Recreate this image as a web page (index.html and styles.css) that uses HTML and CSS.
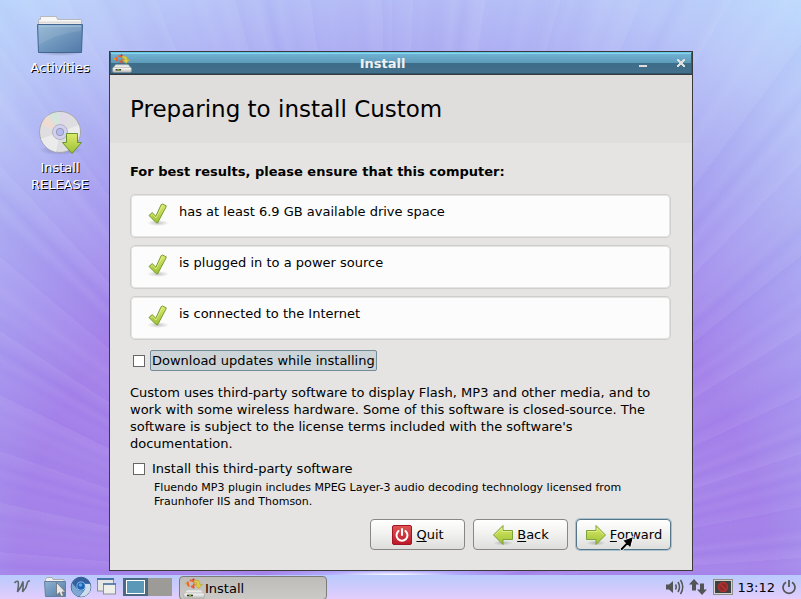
FILE: index.html
```html
<!DOCTYPE html>
<html lang="en">
<head>
<meta charset="utf-8">
<title>Install</title>
<link rel="stylesheet" href="styles.css">
</head>
<body>
<svg class="defs" aria-hidden="true">
  <defs>
    <linearGradient id="lime" x1="0" y1="0" x2="0" y2="1"><stop offset="0" stop-color="#dcea6c"/><stop offset="1" stop-color="#9cc032"/></linearGradient>
    <linearGradient id="blue" x1="0" y1="0" x2="1" y2="1"><stop offset="0" stop-color="#8fb4d2"/><stop offset="1" stop-color="#5079a8"/></linearGradient>
    <linearGradient id="red" x1="0" y1="0" x2="0" y2="1"><stop offset="0" stop-color="#df5656"/><stop offset="1" stop-color="#bd1726"/></linearGradient>
    <linearGradient id="metal" x1="0" y1="0" x2="0" y2="1"><stop offset="0" stop-color="#ffffff"/><stop offset="1" stop-color="#bdbdb9"/></linearGradient>
    <radialGradient id="shade"><stop offset="0" stop-color="#000" stop-opacity=".22"/><stop offset="1" stop-color="#000" stop-opacity="0"/></radialGradient>
    <symbol id="tick" viewBox="0 0 24 24">
      <ellipse cx="12" cy="20" rx="11" ry="3" fill="url(#shade)"/>
      <path d="M3 12.500 6.200 9.600 9.800 13.200 15.200 1.600 16.500 1 20.200 2.800 20 4 11.500 20 10 19.500Z" fill="url(#lime)" stroke="#779b35" stroke-linejoin="round"/>
      <path d="M5 12.500 6.500 11.300 10 15 16.300 2.600" fill="none" stroke="#f0f5a8" stroke-opacity=".6"/>
    </symbol>
    <symbol id="arrow" viewBox="0 0 22 22">
      <ellipse cx="11" cy="19" rx="10" ry="2.500" fill="url(#shade)"/>
      <path d="M1.500 6.500H11V1.500L20.500 11 11 20.500V15.500H1.500Z" fill="url(#lime)" stroke="#7aa33a" stroke-linejoin="round"/>
      <path d="M2.500 7.500H12V4L19 11" fill="none" stroke="#eef5a0" stroke-opacity=".6"/>
    </symbol>
    <symbol id="installer" viewBox="0 0 22 22">
      <circle cx="8" cy="6.500" r="3.200" fill="none" stroke="#f05a28" stroke-width="1.800" stroke-dasharray="5 1.700"/>
      <circle cx="3.200" cy="6.500" r="1.100" fill="#f39a22"/><circle cx="10.500" cy="2.500" r="1.100" fill="#d9232b"/><circle cx="10.500" cy="10.500" r="1.100" fill="#e6452a"/>
      <path d="M11 3.500Q17 2 17 7.500H19.500L15.500 11.500 11.500 7.500H14Q14 5 11 5.500Z" fill="#dccb48" stroke="#b9a12c" stroke-width=".6"/>
      <path d="M4 13H18L21 17H1Z" fill="#e9e9e7" stroke="#c6c6c2" stroke-width=".6"/>
      <rect x=".8" y="16" width="20.500" height="5.200" rx="1" fill="url(#metal)" stroke="#a0a09b" stroke-width=".6"/>
      <path d="M4 18.500H10" stroke="#333" stroke-width="1.600"/><path d="M6 18.500H8" stroke="#75b821" stroke-width="1.600"/>
    </symbol>
  </defs>
</svg>

<main class="desktop">
  <nav class="shortcuts" aria-label="Desktop">
    <a class="shortcut" href="#activities">
      <svg width="48" height="48" viewBox="0 0 48 48" aria-hidden="true">
        <ellipse cx="24" cy="45" rx="23" ry="3" fill="url(#shade)"/>
        <path d="M2.500 24V11.500H4.500V8.500H20.500L21.500 11.500H45.500V24Z" fill="#f7f7f6" stroke="#b6b8bd"/>
        <path d="M3 14.500H45" stroke="#dedcda" stroke-width="2"/>
        <path d="M1.500 16.500H46.500L45.500 44.500H2.500Z" fill="url(#blue)" stroke="#416691" stroke-linejoin="round"/>
        <path d="M3 18H45" stroke="#a8c5dc"/>
        <path d="M3 18H45V23Q22 25 3 37Z" fill="#fff" opacity=".1"/>
      </svg>
      <span>Activities</span>
    </a>
    <a class="shortcut" href="#install">
      <svg width="48" height="48" viewBox="0 0 48 48" aria-hidden="true">
        <ellipse cx="24" cy="42" rx="22" ry="5" fill="url(#shade)"/>
        <circle cx="24" cy="24" r="20.500" fill="#dedee0" stroke="#a5a5ab"/>
        <path d="M24 24 12 7.500Q18 3.500 24 4Z" fill="#d3e6da" opacity=".8"/>
        <path d="M24 24 5.500 17Q8 10 12 7.500Z" fill="#f0dbd0" opacity=".9"/>
        <path d="M24 24 24 4Q30 4 34 7Z" fill="#e0d8e8" opacity=".8"/>
        <path d="M24 24 43 17Q45 26 42 32Z" fill="#ececed"/>
        <path d="M24 24 5 31Q10 42 20 44Z" fill="#ebebec"/>
        <circle cx="24" cy="24" r="7.500" fill="#d1d1ef" stroke="#b2b2c4"/>
        <circle cx="24" cy="24" r="3.700" fill="#b4baf4" stroke="#9999ad"/>
        <path d="M30.500 25.500H41.500V34.500H45.500L36 45.500 26.500 34.500H30.500Z" fill="url(#lime)" stroke="#68932c" stroke-linejoin="round"/>
      </svg>
      <span>Install RELEASE</span>
    </a>
  </nav>

  <section class="window" aria-label="Install">
    <header class="titlebar">
      <svg width="20" height="20" aria-hidden="true"><use href="#installer"/></svg>
      <h1>Install</h1>
      <div class="controls">
        <button type="button" aria-label="Minimize"><svg width="8" height="8" viewBox="0 0 8 8"><path d="M0 6H8V8H0Z" fill="#dededd"/></svg></button>
        <button type="button" aria-label="Close"><svg width="8" height="8" viewBox="0 0 8 8" shape-rendering="crispEdges"><path d="M0 0H2V1H3V2H5V1H6V0H8V2H7V3H6V5H7V6H8V8H6V7H5V6H3V7H2V8H0V6H1V5H2V3H1V2H0Z" fill="#dededd"/></svg></button>
      </div>
    </header>
    <div class="heading"><h2>Preparing to install Custom</h2></div>
    <form class="content">
      <h3>For best results, please ensure that this computer:</h3>
      <ul class="checks">
        <li><svg width="24" height="24" aria-hidden="true"><use href="#tick"/></svg>has at least 6.9 GB available drive space</li>
        <li><svg width="24" height="24" aria-hidden="true"><use href="#tick"/></svg>is plugged in to a power source</li>
        <li><svg width="24" height="24" aria-hidden="true"><use href="#tick"/></svg>is connected to the Internet</li>
      </ul>
      <div class="option"><input type="checkbox" id="updates"><label class="focused" for="updates">Download updates while installing</label></div>
      <p class="terms">Custom uses third-party software to display Flash, MP3 and other media, and to work with some wireless hardware. Some of this software is closed-source. The software is subject to the license terms included with the software's documentation.</p>
      <div class="option"><input type="checkbox" id="software"><label for="software">Install this third-party software</label></div>
      <p class="note">Fluendo MP3 plugin includes MPEG Layer-3 audio decoding technology licensed from Fraunhofer IIS and Thomson.</p>
      <div class="actions">
        <button type="button">
          <svg width="22" height="22" viewBox="0 0 22 22" aria-hidden="true"><rect x="1.500" y="1.500" width="19" height="19" rx="1.500" fill="url(#red)" stroke="#a31626"/><path d="M7.500 7A5.500 5.500 0 1 0 14.500 7M11 5V11" fill="none" stroke="#fff" stroke-width="2" stroke-linecap="round"/></svg>
          <span><u>Q</u>uit</span>
        </button>
        <button type="button">
          <svg class="flip" width="22" height="22" aria-hidden="true"><use href="#arrow"/></svg>
          <span><u>B</u>ack</span>
        </button>
        <button type="button" class="hover">
          <svg width="22" height="22" aria-hidden="true"><use href="#arrow"/></svg>
          <span><u>F</u>orward</span>
          <svg class="pointer" width="16" height="17" viewBox="0 0 16 17" aria-hidden="true"><path d="M14.500 1.500 3.500 5.500 6.500 8 .8 14 2.800 16 8.500 10 11.500 13Z" fill="#000" stroke="#fff"/></svg>
        </button>
      </div>
    </form>
  </section>
</main>

<footer class="taskbar">
  <div class="launchers">
    <button type="button" class="menu" aria-label="Menu"><svg width="18" height="16" viewBox="0 0 18 16"><path d="M1.500 4Q3.500 1.500 5 2.500 6 4 4.500 13M4.500 13Q8.500 8 10 2.500 10.500 8 9.500 13M9.500 13Q13.500 9 14 5 14.500 1.500 17 2" fill="none" stroke="#5d666b" stroke-width="1.600"/></svg></button>
    <button type="button" aria-label="File manager"><svg width="22" height="22" viewBox="0 0 22 22"><path d="M1.500 8V3.500L3 1.500H8L9 3.500H20V8Z" fill="#f1f1ef" stroke="#aaa"/><path d="M.500 5.500H21.500V20.500H1.500Z" fill="url(#blue)" stroke="#66809e"/><path d="M12.500 6.500V19L15.500 16.500 17 20.500 19.500 19.500 18 16H21.500Z" fill="#e8e8e8" stroke="#707070" stroke-width=".8"/></svg></button>
    <button type="button" aria-label="Web browser"><svg width="22" height="22" viewBox="0 0 22 22"><circle cx="11" cy="11" r="9.800" fill="#5281bb" stroke="#375d91"/><path d="M2 7.500Q8 -1 15 2.500 19 4 20 7.500H11Q7 8 7 12Z" fill="#345f9f"/><path d="M20 8H13Q17 11 14 15L9.500 20.500Q17 21.500 20 15 21.500 11 20 8Z" fill="#cdddec"/><path d="M2 7 7 13Q9 16 13 15L9 20.500Q2 19 1.500 12Z" fill="#7fa9d4"/><circle cx="11" cy="10" r="4.500" fill="#a9cdf0"/><circle cx="11" cy="10" r="3.800" fill="#1b62b5"/><circle cx="10.500" cy="9" r="1.800" fill="#5fa4e2"/></svg></button>
    <button type="button" aria-label="Show desktop"><svg width="22" height="22" viewBox="0 0 22 22"><rect x="1.500" y="3" width="16" height="12" fill="#e6e6e3" stroke="#8a8f98"/><path d="M1 3H18" stroke="#4670a7" stroke-width="2"/><rect x="7.500" y="8" width="12" height="10" fill="#eeeeeb" stroke="#8a8f98"/><path d="M7 8H20" stroke="#4670a7" stroke-width="1.500"/></svg></button>
  </div>
  <div class="pager"><button type="button" class="current" aria-label="Desktop 1"><i></i></button><button type="button" aria-label="Desktop 2"></button></div>
  <button type="button" class="task"><svg width="22" height="22" aria-hidden="true"><use href="#installer"/></svg>Install</button>
  <div class="tray">
    <svg width="20" height="18" viewBox="0 0 20 18" aria-hidden="true"><path d="M1 6.500H4L8 3V15L4 11.500H1Z" fill="#525456"/><path d="M10.500 6.500Q12 9 10.500 11.500M13 4Q16 9 13 14M15.500 2Q20 9 15.500 16" fill="none" stroke="#525456" stroke-width="1.500"/></svg>
    <svg width="18" height="18" viewBox="0 0 18 18" aria-hidden="true"><path d="M5 1 10 6.500H7V12.500H3V6.500H0ZM13 17 8 11.500H11V5.500H15V11.500H18Z" fill="#525456"/></svg>
    <svg class="monitor" width="20" height="16" viewBox="0 0 20 16" aria-hidden="true"><rect x=".5" y=".5" width="19" height="15" fill="#d5d4cc" stroke="#8e8e87"/><rect x="2" y="2" width="16" height="12" fill="#3d4143"/><circle cx="10" cy="8" r="4.500" fill="#8c2a2a" stroke="#b53030" stroke-width="1.500"/><path d="M7 5 13 11" stroke="#b53030" stroke-width="1.500"/></svg>
    <time>13:12</time>
    <button type="button" aria-label="Shut down"><svg width="16" height="16" viewBox="0 0 16 16"><path d="M5 3.200A6 6 0 1 0 11 3.200M8 1V8" fill="none" stroke="#55575a" stroke-width="1.800"/></svg></button>
  </div>
</footer>
</body>
</html>
```
FILE: styles.css
```css
* { box-sizing: border-box; }

body {
  margin: 0;
  min-height: 100vh;
  display: flex;
  flex-direction: column;
  font: 13px/17px "DejaVu Sans", sans-serif;
  color: #000;
}

h1, h2, h3, p, ul { margin: 0; padding: 0; }
button { font: inherit; color: inherit; border: 0; padding: 0; background: none; }
svg { display: block; flex: none; }
.defs { position: absolute; width: 0; height: 0; }

.desktop {
  flex: 1;
  display: flex;
  padding: 51px 108px 4px 0;
  background:
    radial-gradient(ellipse 130px 8px at 49% 100%, #ffffff 0%, #b4b4ffcc 50%, #9f91f500 100%),
    repeating-conic-gradient(from 0deg at 49% 102%, #ffffff00 0deg, #ffffff0a 1deg, #ffffff10 2deg, #ffffff00 2deg, #ffffff06 4deg, #ffffff00 5deg, #ffffff0c 6deg, #ffffff00 7deg),
    repeating-conic-gradient(from 3deg at 49% 102%, #5040c000 0deg, #5040c008 1deg, #5040c000 3deg, #5040c008 4deg, #5040c000 5deg, #5040c000 11deg),
    repeating-conic-gradient(from 0deg at 49% 102%, #ffffff00 0deg, #ffffff0a 9deg, #ffffff00 10deg, #ffffff00 13deg),
    radial-gradient(circle 720px at 49% 102%, #a481e9 0%, #a380e9 52%, #a697ef 64%, #adaff3 76%, #b8c6f8 87%, #bcdafd 100%);
}

.shortcuts {
  flex: none;
  width: 109px;
  margin-top: -43px;
  padding-left: 11px;
  display: flex;
  flex-direction: column;
  align-items: center;
  gap: 32px;
}
.shortcut {
  width: 70px;
  display: flex;
  flex-direction: column;
  align-items: center;
  gap: 3px;
  color: #fff;
  text-align: center;
  text-decoration: none;
  text-shadow: 1px 1px 0 #000;
}

.window {
  flex: 1;
  min-width: 0;
  display: flex;
  flex-direction: column;
  border: 1px solid #3a3a3a;
  background: #e5e4e2;
}
.titlebar {
  height: 22px;
  display: flex;
  align-items: center;
  padding: 0 0 0 1px;
  border: 1px solid #325d74;
  border-top-color: #66c5e4;
  border-bottom-color: #2d566d;
  box-shadow: 0 1px #3a3a3a, inset 0 1px #84d7ef;
  background: linear-gradient(#74b4d4 0, #5c9aba 50%, #3e6d8a 50%, #436f8a 100%);
}
.titlebar h1 {
  flex: 1;
  text-align: center;
  font-size: 13px;
  line-height: 17px;
  color: #f0f0f0;
}
.controls { display: flex; gap: 18px; }
.controls button { width: 20px; height: 17px; display: grid; place-items: center; }

.heading {
  margin-top: 1px;
  height: 68px;
  display: flex;
  align-items: center;
  padding: 0 20px;
  background: #dfdedc;
}
.heading h2 { font-weight: normal; font-size: 23px; line-height: 28px; }

.content {
  flex: 1;
  display: flex;
  flex-direction: column;
  padding: 20px 21px 20px 20px;
}
.content h3 { font-size: 13px; line-height: 17px; }
.checks { list-style: none; display: grid; gap: 7px; margin: 14px 0 10px; }
.checks li {
  height: 44px;
  display: flex;
  align-items: flex-start;
  gap: 9px;
  padding: 8px 15px;
  border: 1px solid #cfcecd;
  box-shadow: inset 0 0 0 1px #e4e4e3;
  border-radius: 5px;
  background: #fcfcfc;
}
.option { display: flex; align-items: center; gap: 5px; padding-left: 3px; }
.option input {
  appearance: none;
  width: 12px;
  height: 12px;
  margin: 0;
  border: 1px solid #666;
  background: #fff;
}
.option label { padding: 1px; border: 1px solid transparent; }
.option .focused { border-color: #728b99; border-radius: 2px; background: #ccd4d8; }
.terms { margin: 13px 0 6px; }
.note { padding: 2px 24px 0; font-size: 11px; line-height: 14px; }

.actions { display: flex; justify-content: flex-end; gap: 8px; margin-top: 10px; }
.actions button {
  position: relative;
  width: 95px;
  height: 31px;
  display: flex;
  align-items: center;
  justify-content: center;
  gap: 3px;
  border: 1px solid #888785;
  border-radius: 4px;
  background: linear-gradient(#ffffff, #f2f2f1 45%, #dededd);
}
.actions .hover { border-color: #557688; box-shadow: 0 0 0 1px #a9c2cd; }
.flip { transform: scaleX(-1); }
.actions u { text-underline-offset: 2px; }
.pointer { position: absolute; right: 35px; bottom: -3px; }

.taskbar {
  height: 24px;
  flex: none;
  overflow: hidden;
  display: flex;
  align-items: center;
  padding: 0 4px 0 13px;
  background: linear-gradient(#b9cafc, #cdcbfc 50%, #e4cefd);
}
.launchers { display: flex; align-items: center; gap: 4px; }
.menu { margin-right: 9px; }
.pager { display: flex; margin-left: 5px; }
.pager button { width: 24px; height: 18px; background: #9c9b98; }
.pager .current { width: 25px; padding: 2px 3px; background: #496a80; }
.pager i { display: block; height: 14px; border: 1px solid #fff; background: #5b97b7; }
.task {
  align-self: flex-start;
  width: 148px;
  height: 24px;
  margin: 1px 0 0 7px;
  display: flex;
  align-items: center;
  padding-left: 3px;
  border: 1px solid #7c7b79;
  border-radius: 4px;
  background: linear-gradient(#bdbcb9, #cbcac7);
}
.tray { margin-left: auto; display: flex; align-items: center; gap: 4px; }
.monitor { margin-left: 2px; }
.tray time { margin: 0 2px 0 1px; }
```
